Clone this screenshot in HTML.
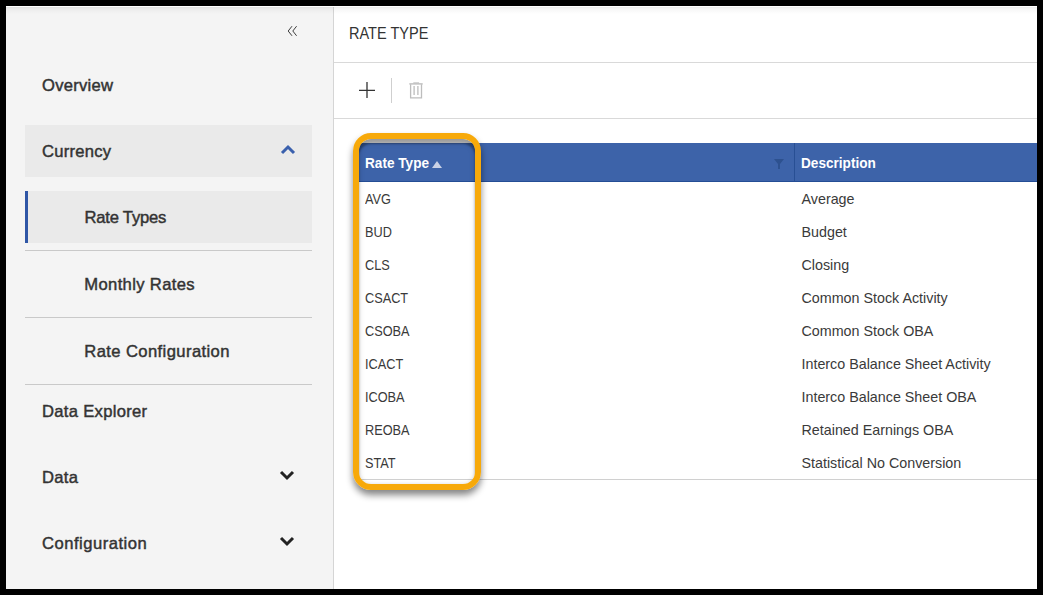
<!DOCTYPE html>
<html><head><meta charset="utf-8">
<style>
html,body{margin:0;padding:0;}
body{width:1043px;height:595px;background:#000;position:relative;overflow:hidden;font-family:"Liberation Sans",sans-serif;color:#333;}
.a{position:absolute;}
.t{position:absolute;white-space:nowrap;line-height:1;}
#scr{left:6px;top:6px;width:1031px;height:583px;background:#fff;}
#side{left:6px;top:6px;width:327px;height:583px;background:#f4f4f4;}
#sideb{left:333px;top:6px;width:1px;height:583px;background:#d5d5d5;}
.sb{color:#333;letter-spacing:0.3px;-webkit-text-stroke:0.45px #333;}
.box{background:#eaeaea;left:25px;width:287px;height:52px;}
.hl{left:25px;width:287px;height:1px;background:#c9c9c9;}
.hline{left:334px;width:703px;height:1px;background:#d9d9d9;}
.cell{color:#3a3a3a;}
.hd{font-weight:bold;color:#fff;}
#topsh{left:6px;top:6px;width:1031px;height:9px;background:linear-gradient(#fff 0,#fff 1px,rgba(0,0,0,0.075) 1px,rgba(0,0,0,0.035) 3px,rgba(0,0,0,0) 8px);}
</style></head><body>
<div class="a" id="scr"></div>
<div class="a" id="side"></div>
<div class="a" id="sideb"></div>
<svg class="a" style="left:286px;top:24px" width="14" height="14" viewBox="0 0 14 14">
  <path d="M6 2.2 L2.2 7 L6 11.8 M10.6 2.2 L6.8 7 L10.6 11.8" fill="none" stroke="#3c3c3c" stroke-width="1"/>
</svg>
<div class="a box" style="top:125px"></div>
<svg class="a" style="left:280px;top:143px" width="16" height="13" viewBox="0 0 16 13">
  <path d="M2 10 L8 4 L14 10" fill="none" stroke="#3a60ad" stroke-width="3"/>
</svg>
<div class="a box" style="top:191px"></div>
<div class="a" style="left:25px;top:191px;width:3px;height:52px;background:#2f56a6"></div>
<div class="a hl" style="top:250px"></div>
<div class="a hl" style="top:317px"></div>
<div class="a hl" style="top:384px"></div>
<svg class="a" style="left:279px;top:469px" width="16" height="13" viewBox="0 0 16 13">
  <path d="M2 3 L8 9 L14 3" fill="none" stroke="#222" stroke-width="3"/>
</svg>
<svg class="a" style="left:279px;top:535px" width="16" height="13" viewBox="0 0 16 13">
  <path d="M2 3 L8 9 L14 3" fill="none" stroke="#222" stroke-width="3"/>
</svg>
<div class="t sb" style="left:42px;top:77.85px;font-size:16.6px;letter-spacing:0.25px;">Overview</div>
<div class="t sb" style="left:42px;top:143.75px;font-size:16.6px;letter-spacing:0.25px;">Currency</div>
<div class="t sb" style="left:84.5px;top:209.95px;font-size:16.6px;letter-spacing:-0.2px;">Rate Types</div>
<div class="t sb" style="left:84.3px;top:277.15px;font-size:16.6px;letter-spacing:0.35px;">Monthly Rates</div>
<div class="t sb" style="left:84.3px;top:344.05px;font-size:16.6px;letter-spacing:0.4px;">Rate Configuration</div>
<div class="t sb" style="left:42px;top:404.05px;font-size:16.6px;letter-spacing:0.3px;">Data Explorer</div>
<div class="t sb" style="left:42px;top:469.75px;font-size:16.6px;letter-spacing:0.3px;">Data</div>
<div class="t sb" style="left:42px;top:536.05px;font-size:16.6px;letter-spacing:0.5px;">Configuration</div>
<div class="t " style="left:349px;top:24.83px;font-size:16.5px;transform:scaleX(0.88);transform-origin:0 0;">RATE TYPE</div>
<div class="a hline" style="top:62px"></div>
<svg class="a" style="left:357px;top:80px" width="20" height="20" viewBox="0 0 20 20">
  <path d="M10 2 V18 M2 10.4 H18" fill="none" stroke="#333" stroke-width="1.3"/>
</svg>
<div class="a" style="left:391px;top:78px;width:1px;height:25px;background:#cfcfcf"></div>
<svg class="a" style="left:406px;top:80px" width="20" height="20" viewBox="0 0 20 20">
  <path d="M3.3 3.9 H16.7" fill="none" stroke="#bdbdbd" stroke-width="1.4"/>
  <rect x="7.3" y="2.3" width="5.8" height="1.6" fill="#c4c4c4"/>
  <path d="M4.6 4.3 V17.8 H15.5 V4.3" fill="none" stroke="#bdbdbd" stroke-width="1.3"/>
  <path d="M8.1 6 V15 M11.9 6 V15" fill="none" stroke="#bdbdbd" stroke-width="1.3"/>
</svg>
<div class="a hline" style="top:118px"></div>
<div class="a" style="left:359px;top:143px;width:678px;height:38px;background:#3d63a9"></div>
<div class="a" style="left:359px;top:181px;width:678px;height:1px;background:#244d95"></div>
<div class="a" style="left:794px;top:143px;width:1px;height:38px;background:#284f94"></div>
<svg class="a" style="left:431px;top:160px" width="12" height="9" viewBox="0 0 12 9">
  <path d="M1 8 L6 1 L11 8 Z" fill="#c9d1e6"/>
</svg>
<svg class="a" style="left:773px;top:158px" width="12" height="12" viewBox="0 0 12 12">
  <path d="M1 1 H11 L7 6 V11 H5 V6 Z" fill="#2d518f"/>
</svg>
<div class="t hd" style="left:364.5px;top:155.48px;font-size:15.5px;transform:scaleX(0.878);transform-origin:0 0;">Rate Type</div>
<div class="t hd" style="left:801px;top:155.48px;font-size:15.5px;transform:scaleX(0.878);transform-origin:0 0;">Description</div>
<div class="t cell" style="left:364.5px;top:191.80px;font-size:14.3px;transform:scaleX(0.89);transform-origin:0 0;">AVG</div>
<div class="t cell" style="left:801.5px;top:191.80px;font-size:14.3px;">Average</div>
<div class="t cell" style="left:364.5px;top:224.80px;font-size:14.3px;transform:scaleX(0.89);transform-origin:0 0;">BUD</div>
<div class="t cell" style="left:801.5px;top:224.80px;font-size:14.3px;">Budget</div>
<div class="t cell" style="left:364.5px;top:257.80px;font-size:14.3px;transform:scaleX(0.89);transform-origin:0 0;">CLS</div>
<div class="t cell" style="left:801.5px;top:257.80px;font-size:14.3px;">Closing</div>
<div class="t cell" style="left:364.5px;top:290.80px;font-size:14.3px;transform:scaleX(0.89);transform-origin:0 0;">CSACT</div>
<div class="t cell" style="left:801.5px;top:290.80px;font-size:14.3px;">Common Stock Activity</div>
<div class="t cell" style="left:364.5px;top:323.80px;font-size:14.3px;transform:scaleX(0.89);transform-origin:0 0;">CSOBA</div>
<div class="t cell" style="left:801.5px;top:323.80px;font-size:14.3px;">Common Stock OBA</div>
<div class="t cell" style="left:364.5px;top:356.80px;font-size:14.3px;transform:scaleX(0.89);transform-origin:0 0;">ICACT</div>
<div class="t cell" style="left:801.5px;top:356.80px;font-size:14.3px;">Interco Balance Sheet Activity</div>
<div class="t cell" style="left:364.5px;top:389.80px;font-size:14.3px;transform:scaleX(0.89);transform-origin:0 0;">ICOBA</div>
<div class="t cell" style="left:801.5px;top:389.80px;font-size:14.3px;">Interco Balance Sheet OBA</div>
<div class="t cell" style="left:364.5px;top:422.80px;font-size:14.3px;transform:scaleX(0.89);transform-origin:0 0;">REOBA</div>
<div class="t cell" style="left:801.5px;top:422.80px;font-size:14.3px;">Retained Earnings OBA</div>
<div class="t cell" style="left:364.5px;top:455.80px;font-size:14.3px;transform:scaleX(0.89);transform-origin:0 0;">STAT</div>
<div class="t cell" style="left:801.5px;top:455.80px;font-size:14.3px;">Statistical No Conversion</div>
<div class="a" style="left:359px;top:479px;width:678px;height:1px;background:#d0d0d0"></div>
<div class="a" style="left:353px;top:133px;width:116px;height:345px;border:6px solid #f7a90a;border-radius:18px;box-shadow:0 5px 7px rgba(0,0,0,0.48), inset 0 5px 2px rgba(0,0,0,0.3), inset 0 4px 6px rgba(0,0,0,0.1), inset 0 0 4px rgba(0,0,0,0.12)"></div>
<div class="a" id="topsh"></div>
<div class="a" style="left:0;top:0;width:1043px;height:6px;background:#000"></div>
<div class="a" style="left:0;top:589px;width:1043px;height:6px;background:#000"></div>
<div class="a" style="left:0;top:0;width:6px;height:595px;background:#000"></div>
<div class="a" style="left:1037px;top:0;width:6px;height:595px;background:#000"></div>
</body></html>
